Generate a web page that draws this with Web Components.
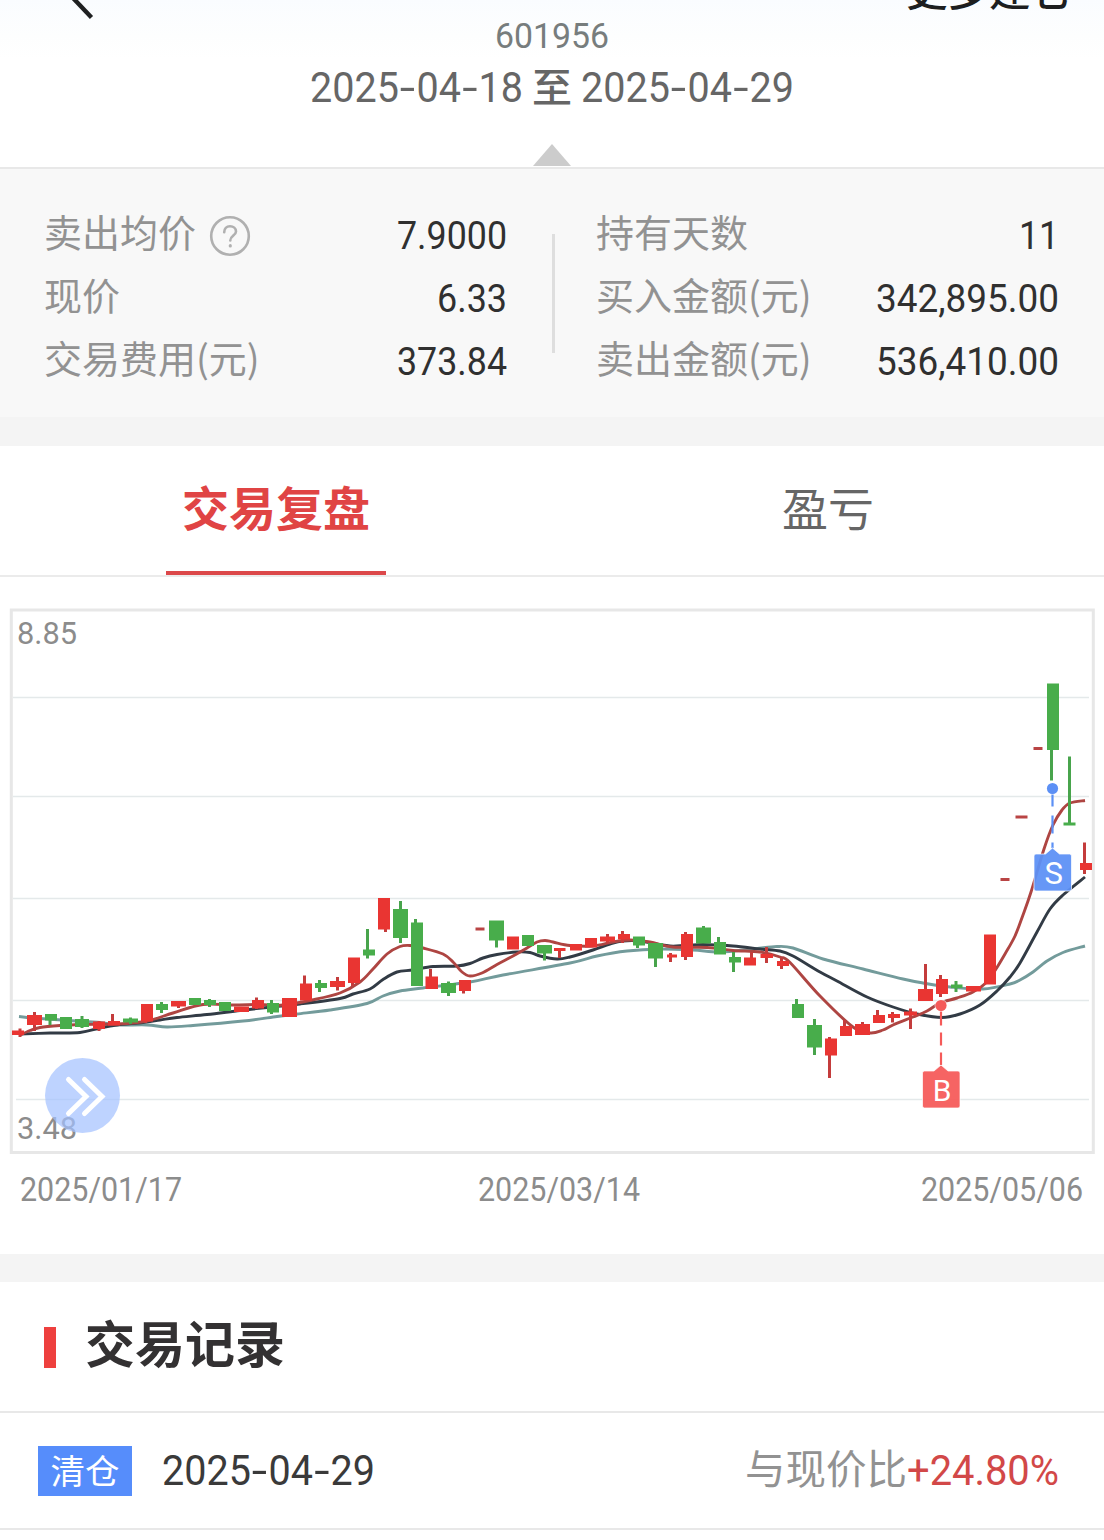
<!DOCTYPE html>
<html lang="zh-CN">
<head>
<meta charset="utf-8">
<title>交易复盘</title>
<style>
  html, body { margin: 0; padding: 0; background: #fff; }
  body { width: 1104px; height: 1540px; overflow: hidden; font-family: "Noto Sans CJK SC", sans-serif; }
</style>
</head>
<body>
<trade-page></trade-page>

<script>
const shadow = (el, html) => { el.attachShadow({ mode: 'open' }).innerHTML = html; };

/* Header: cropped navigation row, stock code, holding period */
class PageHeader extends HTMLElement {
  constructor() {
    super();
    shadow(this, `
    <style>
      :host { display: flex; flex-direction: column; align-items: center; height: 167px; overflow: hidden;
        background: linear-gradient(#fafcff 0, #fdfefe 36px, #fff 60px); border-bottom: 2px solid #e8e8e8; box-sizing: content-box; }
      .nav { display: flex; justify-content: space-between; width: 100%; height: 20px; box-sizing: border-box; padding: 0 32px 0 60px; overflow: hidden; }
      .nav svg { display: block; }
      .more { font-size: 41.5px; line-height: 60px; margin-top: -42px; color: #1d1e20; white-space: nowrap; font-weight: 500; }
      .code { height: 32px; display: flex; align-items: center; color: #777d7d; padding-top: 1px; box-sizing: border-box; }
      .range { display: flex; align-items: center; height: 71px; margin-top: 0; color: #666; gap: 9px; }
      .to { font-size: 40px; line-height: 60px; margin-top: -6px; width: 40px; font-weight: 500; }
      .tri { display: block; margin-top: 21px; }
    </style>
    <div class="nav">
      <svg width="40" height="20" viewBox="60 0 40 20"><path d="M64 -11.500L91.500 17.500" stroke="#1f2021" stroke-width="4.400" fill="none"/></svg>
      <div class="more">更多建仓</div>
    </div>
    <div class="code"><fit-text size="35" w="114">601956</fit-text></div>
    <div class="range"><fit-text size="43" w="213">2025<i>-</i>04<i>-</i>18</fit-text><span class="to">至</span><fit-text size="43" w="213">2025<i>-</i>04<i>-</i>29</fit-text></div>
    <svg class="tri" width="38" height="22"><path d="M19 0L38 22H0z" fill="#ccc"/></svg>`);
  }
}

/* One label and value pair */
class StatRow extends HTMLElement {
  constructor() {
    super();
    shadow(this, `
    <style>
      :host { display: flex; justify-content: space-between; align-items: center; height: 63px; }
      .l { display: flex; align-items: center; font-size: 38px; line-height: 60px; margin: -10px 0 0 -1px; color: #929292; white-space: nowrap; }
      .v { display: flex; color: #303030; margin-top: 2px; }
      ::slotted(svg) { margin: 10px 0 0 13px; }
    </style>
    <div class="l"><slot></slot><slot name="icon"></slot></div>
    <div class="v"><slot name="value"></slot></div>`);
  }
}

class StatPanel extends HTMLElement {
  constructor() {
    super();
    shadow(this, `
    <style>
      :host { display: flex; height: 277px; background: linear-gradient(#f8f8f8 248px, #f4f4f4 248px); box-sizing: border-box; padding-top: 35px; }
      .c { width: 462px; margin-left: 45px; }
      .c + i + .c { margin-left: 42px; width: 462px; }
      i { display: block; width: 3px; height: 119px; margin: 30px 0 0 45px; background: #dedede; }
    </style>
    <div class="c">
      <stat-row>卖出均价
        <svg slot="icon" width="42" height="42" viewBox="0 0 42 42" fill="none" stroke="#b0b0b0" stroke-width="2.600" stroke-linecap="round"><circle cx="21" cy="21" r="18.800"/><path d="M15.200 17.300C15.200 13.500 17.600 11.300 21 11.300S27 13.500 27 16.500C27 20.500 21.300 20.800 21.300 25.500"/><path d="M21.300 30.700v.300" stroke-width="3.200"/></svg>
        <fit-text slot="value" size="38.5" w="110">7.9000</fit-text></stat-row>
      <stat-row>现价<fit-text slot="value" size="38.5" w="70">6.33</fit-text></stat-row>
      <stat-row>交易费用(元)<fit-text slot="value" size="38.5" w="110">373.84</fit-text></stat-row>
    </div>
    <i></i>
    <div class="c">
      <stat-row>持有天数<fit-text slot="value" size="38.5" w="40">11</fit-text></stat-row>
      <stat-row>买入金额(元)<fit-text slot="value" size="38.5" w="183">342,895.00</fit-text></stat-row>
      <stat-row>卖出金额(元)<fit-text slot="value" size="38.5" w="183">536,410.00</fit-text></stat-row>
    </div>`);
  }
}

class TabBar extends HTMLElement {
  constructor() {
    super();
    shadow(this, `
    <style>
      :host { display: flex; height: 129px; border-bottom: 2px solid #ebebeb; }
      div { flex: 1; display: flex; flex-direction: column; align-items: center; justify-content: space-between; font-size: 46px; color: #666; line-height: 70px; }
      span { margin-top: 25px; }
      .on { color: #e04444; font-weight: 700; font-size: 47px; }
      b { display: block; width: 220px; height: 4px; background: #dc484a; }
    </style>
    <div class="on"><span>交易复盘</span><b></b></div><div><span>盈亏</span></div>`);
  }
}

/* Candles: colour, body left, right, top, bottom, wick x, wick top, wick bottom */
const CANDLES = [
 ['r',12,24,1030.5,1035,20,1028.5,1037],['r',27,42,1015,1025,34.5,1012,1031],['g',45,57,1014,1020.5,50,1014,1025],
 ['g',60,72,1017,1029],['g',75,89,1019,1027,82,1016,1028],['r',93,105,1021.5,1029,99,1021,1031],
 ['r',108,120,1021,1025.5,112.5,1014,1025],['g',123,138,1018.5,1022.5,130.5,1017.5,1024],['r',141,153,1004,1021.5,145.5,1004,1023],
 ['g',156,168,1004,1010,161.5,1002,1013],['r',171,186,1001,1006.5,178.5,1001,1008],['g',189,201,998,1005],
 ['g',204,216,1000,1005,209.5,999,1007],['g',219,231,1002,1011],['r',234,249,1006.5,1012],
 ['r',252,264,1000,1008.5,256.5,997.5,1009],['g',267,279,1003,1012.5,271.5,1000,1014],['r',282,297,998,1017],
 ['r',300,312,983.5,1000.5,304.5,975.5,1000],['g',315,327,983,988,319.5,980,992],['r',330,345,981,987,337.5,977,990.5],
 ['r',348,360,957.5,983,352.5,958,986],['g',363,375,949.5,955.5,367.5,929,958.5],['r',378,390,898,929.5,385.5,898,932],
 ['g',393,408,909,938,400.5,901,943],['g',411,423,922.5,986,415.5,919,986],['r',425.5,438,976.5,989,430.5,969,989],
 ['g',441,456,983,993,448.5,981.5,996],['r',459,471,980,991,463.5,980,993.5],['d',475.5,484.5,927.5,930.5],
 ['g',489,504,920.5,940.5,496.5,921,947.5],['r',507,519,936.5,949.5],['g',522,534,935,946],
 ['g',537,552,945,953.5,544.5,945,960.5],['r',554,565.5,948,951,559.5,948,958],['r',570,582,944,950.5],
 ['r',585,597,938,947.5],['r',600,615,936.5,941.5,607.5,934,943.5],['r',618,630,934,939.5,622.5,931,943],
 ['g',633,645,936.5,945.5,637.5,937,948],['g',648,663,943,958.5,655.5,943,967],['r',667,677,954.5,957.5,670.5,953,962],
 ['r',681,693,934,957,685.5,932,960],['g',696,711,927.5,943.5,703.5,926,943],['g',714,726,942,954.5,718.5,937,954],
 ['g',729,741,957,962.5,733.5,952,972],['r',744,756,957.5,965.5,751.5,952,965],['r',760.5,773,954,958,766.5,947,963],
 ['r',777,789,961,966,781.5,957.5,969],['g',792,804,1004,1018,796.5,999,1018],['g',807,822,1025,1047.5,814.5,1019,1055],
 ['r',825,837,1038.5,1055.5,829.5,1037,1078],['r',840,852,1026,1036,844.5,1020,1036],['r',855,870,1024,1035,862.5,1022,1035],
 ['r',873,885,1015,1023,877.5,1010,1023],['r',888,900,1014,1018,892.5,1012,1022.5],['r',904,917,1011.5,1015.5,910.5,1008.5,1029],
 ['r',918,933,989,1001,925.5,964,1001],['r',936,948,979,994,940.5,975,997],['g',951,962.5,984.5,988,956,981,992],
 ['r',966,981,986,991.5],['r',984,996,934.5,984.5],['d',1000.5,1009.5,878,881],['d',1015.5,1027.5,815.5,818.5],['d',1033.5,1042.5,747,750],
 ['g',1047,1059,683.5,750,1051.5,684,780.5],['g',1063.5,1075.5,822.5,825.5,1069.5,756.5,824],['r',1080,1092,863,870,1084.5,842.5,874]
];
const MA_FAST = [20,1035,30,1030.5,40,1027.5,60,1025.5,80,1024.5,117,1024,147,1021,173,1013,203,1004.5,233,1005,260,1004.5,283,1005,312,1000,340,993,360,982,373,969,387,954,400,946.5,410,945.5,423,948,443,954,453,962,462,972,470,976,482,973,497,964.5,513,956,527,948,537,942,545,940.5,553,942,570,945.5,593,946,613,942,630,940,650,942,673,947,707,947.5,733,950.5,760,952,780,957,790,962.5,820,996,853,1027,870,1033,883,1030,893,1025,913,1017,927,1011,940,1003,957,998,973,992,987,982,996,969,1005,954,1015,936,1023,915,1031,892,1044,849,1053,825,1062,810,1070,803,1085,800.5];
const MA_MID = [20,1034,50,1033,80,1032.5,100,1028,117,1025,143,1022.5,160,1020,177,1017.5,207,1014.5,240,1010.5,267,1007.5,300,1004,340,998.5,353,994,370,989,383,979.5,397,972,413,970,433,966.5,457,966,470,963.5,483,958,497,954.5,517,952,530,952.5,540,956,557,959,570,957,593,950,610,944,623,941,640,941,670,946,703,944.5,733,946,760,949,780,951,793,956,820,972,837,981,867,997,893,1007,917,1014,942,1017.5,960,1014,980,1005,997,991,1010,977,1020,963,1037,932,1050,909,1063,895,1085,877];
const MA_SLOW = [19,1016.5,33,1018,70,1020.5,100,1022.5,117,1025,147,1025,167,1027,193,1025.5,243,1021,277,1016.5,297,1014,330,1010,367,1003.5,383,996,400,991,423,988,470,982,503,975,570,963,597,956,627,951,660,949,693,950,720,952,753,949,777,946.5,793,948,823,959,863,969,903,979,923,983,950,987,983,989,1010,984,1020,980,1033,972,1047,961,1063,952.5,1085,946];

function smooth(a) {
  const p = []; for (let i = 0; i < a.length; i += 2) p.push([a[i], a[i + 1]]);
  let d = `M${p[0]}`;
  for (let i = 0; i < p.length - 1; i++) {
    const p0 = p[i - 1] || p[i], p1 = p[i], p2 = p[i + 1], p3 = p[i + 2] || p2;
    d += `C${p1[0] + (p2[0] - p0[0]) / 6} ${p1[1] + (p2[1] - p0[1]) / 6} ${p2[0] - (p3[0] - p1[0]) / 6} ${p2[1] - (p3[1] - p1[1]) / 6} ${p2[0]} ${p2[1]}`;
  }
  return d;
}
class KlineChart extends HTMLElement {
  constructor() {
    super();
    const col = { r: '#e93532', g: '#48ad4b', d: '#b94444' }, wick = { r: '#c43c3c', g: '#48a44c' };
    const candles = CANDLES.map(([c, l, r, t, b, x, wt, wb]) =>
      (x ? `<path d="M${x} ${wt}V${wb}" stroke="${wick[c]}" stroke-width="3"/>` : '') +
      `<rect x="${l}" y="${t}" width="${r - l}" height="${b - t}" fill="${col[c]}"/>`).join('');
    const line = (a, c) => `<path d="${smooth(a)}" fill="none" stroke="${c}" stroke-width="2.900"/>`;
    const marker = (x, dot, apex, c, ch, fs) => `
      <path d="M${x} ${dot}V${apex}" stroke="${c}" stroke-width="2.200" stroke-dasharray="${ch === 'S' ? '18 9' : '20 7 13 7'}"/>
      <circle cx="${x}" cy="${dot}" r="6.500" fill="#fff" opacity=".6"/><circle cx="${x}" cy="${dot}" r="5.600" fill="${c}"/>
      <path d="M${x} ${apex}l7 6H${x + 17}a2 2 0 0 1 2 2V${apex + 41}a2 2 0 0 1-2 2H${x - 16.5}a2 2 0 0 1-2-2V${apex + 8}a2 2 0 0 1 2-2H${x - 7}z" fill="${c}" fill-opacity=".94" stroke="#fff" stroke-opacity=".7" stroke-width="1"/>
      <text x="${x + 1.2}" y="${apex + 36}" text-anchor="middle" font-family="Roboto" font-size="${fs}" fill="#fff">${ch}</text>`;
    shadow(this, `
    <style>
      :host { display: block; height: 677px; }
      svg { display: block; }
      .dates { display: flex; padding: 0 21px 0 20px; height: 44px; margin-top: 1px; align-items: center; color: #8c8c8c; }
      .dates fit-text:nth-child(2) { margin: 0 auto 0 296px; }
    </style>
    <svg width="1104" height="590" viewBox="0 577 1104 590">
      <path d="M13 697.500H1089M13 796.500H1089M13 898.500H1089M13 1000.500H1089M16 1099.500H1089" stroke="#e4e9ea" stroke-width="1.600"/>
      <rect x="11.300" y="610" width="1082" height="542.500" fill="none" stroke="#e7e7e7" stroke-width="3"/>
      ${line(MA_SLOW, '#739b9b')}${line(MA_MID, '#323b45')}${line(MA_FAST, '#ae4542')}
      ${candles}
      ${marker(941, 1005.5, 1065, '#f55a59', 'B', 30)}${marker(1052.5, 788.5, 848, '#5c90f5', 'S', 31)}
      <g font-family="Roboto" font-size="31.500" fill="#8c8c8c">
        <text x="17" y="644" textLength="60" lengthAdjust="spacingAndGlyphs">8.85</text>
        <text x="17" y="1139" textLength="60" lengthAdjust="spacingAndGlyphs">3.48</text>
      </g>
      <circle cx="82.500" cy="1095.500" r="37.500" fill="#a2c1ff" fill-opacity=".7"/>
      <path d="M68.500 1079.500L86 1096.500L68.500 1113.500M84.500 1079.500L102 1096.500L84.500 1113.500" fill="none" stroke="#fff" stroke-width="5" stroke-linecap="round"/>
    </svg>
    <div class="dates"><fit-text size="32.5" w="162">2025/01/17</fit-text><fit-text size="32.5" w="162">2025/03/14</fit-text><fit-text size="32.5" w="162">2025/05/06</fit-text></div>`);
  }
}

class TradeRecords extends HTMLElement {
  constructor() {
    super();
    shadow(this, `
    <style>
      :host { display: block; border-top: 28px solid #f4f4f4; }
      h2 { display: flex; align-items: center; gap: 29px; margin: 0; height: 129px; padding-left: 44px; font-size: 50px; font-weight: 700; line-height: 74px; color: #333132; border-bottom: 2px solid #e8e8e8; }
      h2 i { width: 12px; height: 41px; background: #ee403e; margin-top: 2px; }
      h2 span { margin-top: -11px; }
      .row { display: flex; align-items: center; height: 115px; padding: 0 45px 0 38px; border-bottom: 2px solid #e8e8e8; color: #3a3a3a; }
      .tag { width: 94px; height: 50px; line-height: 46px; font-size: 34.500px; text-align: center; background: #568dfb; color: #fff; }
      .d { margin-left: 30px; display: flex; }
      .cmp { margin-left: auto; display: flex; align-items: center; color: #929292; font-size: 40.500px; line-height: 60px; }
      .cmp span { margin-top: -8px; }
      .cmp fit-text { color: #d24848; }
    </style>
    <h2><i></i><span>交易记录</span></h2>
    <div class="row"><div class="tag">清仓</div><div class="d"><fit-text size="43" w="213">2025<i>-</i>04<i>-</i>29</fit-text></div>
      <div class="cmp"><span>与现价比</span><fit-text size="42.5" w="152">+24.80%</fit-text></div></div>`);
  }
}

class TradePage extends HTMLElement {
  constructor() {
    super();
    shadow(this, `
    <style>:host { display: flex; flex-direction: column; width: 1104px; }</style>
    <page-header></page-header><stat-panel></stat-panel><tab-bar></tab-bar><kline-chart></kline-chart><trade-records></trade-records>`);
  }
}

/* Numerals condensed horizontally to a given advance width; a hyphen inside <i> is widened */
class FitText extends HTMLElement {
  connectedCallback() {
    if (this.shadowRoot) return;
    const size = +this.getAttribute('size'), w = +this.getAttribute('w');
    shadow(this, `
    <style>
      :host { display: flex; align-items: flex-start; width: ${w}px; height: ${size * 1.2}px; line-height: 1.2; }
      span { flex: none; display: block; white-space: nowrap; font: 400 ${size}px/1.2 Roboto, sans-serif; transform-origin: 0 0; }
      ::slotted(i) { display: inline-block; font-style: normal; margin: 0 .085em; transform: scaleX(1.4); }
    </style><span><slot></slot></span>`);
    const s = this.shadowRoot.querySelector('span');
    s.style.transform = `scaleX(${w / s.getBoundingClientRect().width})`;
  }
}

customElements.define('page-header', PageHeader);
customElements.define('stat-row', StatRow);
customElements.define('stat-panel', StatPanel);
customElements.define('tab-bar', TabBar);
customElements.define('kline-chart', KlineChart);
customElements.define('trade-records', TradeRecords);
customElements.define('trade-page', TradePage);
customElements.define('fit-text', FitText);
</script>
</body>
</html>
